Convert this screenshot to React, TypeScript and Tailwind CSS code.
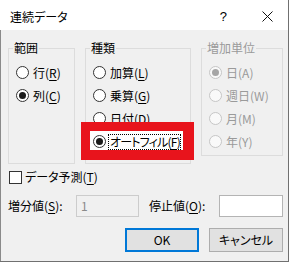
import React from "react";

function Radio({ checked = false, disabled = false }: { checked?: boolean; disabled?: boolean }) {
  return (
    <span
      className={`flex h-[13px] w-[13px] shrink-0 items-center justify-center rounded-full border ${
        disabled ? "border-[#c6c6c6] bg-[#f9f9f9]" : "border-[#333333] bg-white"
      }`}
    >
      {checked && (
        <span className={`h-[7px] w-[7px] rounded-full ${disabled ? "bg-[#a6a6a6]" : "bg-[#1a1a1a]"}`} />
      )}
    </span>
  );
}

function Row({
  label,
  acc,
  checked = false,
  disabled = false,
}: {
  label: string;
  acc: string;
  checked?: boolean;
  disabled?: boolean;
}) {
  return (
    <div className="flex h-[23px] items-center gap-[4px] pl-[7px]">
      <Radio checked={checked} disabled={disabled} />
      <span className={disabled ? "text-[#9a9a9a]" : "text-black"}>
        {label}(
        {disabled ? acc : <span className="underline underline-offset-2">{acc}</span>})
      </span>
    </div>
  );
}

export default function App() {
  return (
    <div className="h-[263px] w-[292px] bg-white font-['Noto_Sans_CJK_JP',sans-serif] text-[12px] leading-[16px] text-black [font-feature-settings:'palt']">
      <div className="flex h-[262px] w-[289px] flex-col border-b border-r border-[#707070]">
        {/* title bar */}
        <div className="flex h-[30px] shrink-0 items-center bg-white pl-[10px] pr-[15px] pt-[3px]">
          <span className="text-[12px]">連続データ</span>
          <span className="ml-auto mr-[35px] font-['Liberation_Sans',sans-serif] text-[13px]">?</span>
          <svg width="11" height="11" viewBox="0 0 11 11" className="mb-[1px]">
            <path d="M0.5 0.5 L10.5 10.5 M10.5 0.5 L0.5 10.5" stroke="#111" strokeWidth="1" />
          </svg>
        </div>

        {/* body */}
        <div className="flex flex-1 flex-col border-l border-[#8a8a8a] bg-[#f0f0f0] pl-[7px] pr-[5px] pt-[10px]">
          <div className="flex gap-[10px]">
            <fieldset className="h-[124px] w-[67px] border border-[#dcdcdc]">
              <legend className="ml-[4px] px-[1px]">範囲</legend>
              <div className="pt-[5px]">
                <Row label="行" acc="R" />
                <Row label="列" acc="C" checked />
              </div>
            </fieldset>

            <fieldset className="h-[124px] w-[106px] border border-[#dcdcdc]">
              <legend className="ml-[4px] px-[1px]">種類</legend>
              <div className="pt-[5px]">
                <Row label="加算" acc="L" />
                <Row label="乗算" acc="G" />
                <Row label="日付" acc="D" />
                <div className="relative flex h-[23px] items-center pl-[7px]">
                  <div className="absolute left-[-5px] top-[-8px] h-[38px] w-[113px] border-b-[10px] border-l-[9px] border-r-[11px] border-t-[9px] border-[#e8141c] bg-white" />
                  <span className="relative">
                    <Radio checked />
                  </span>
                  <span className="relative ml-[2px] whitespace-nowrap border border-dotted border-black pl-[1px] pr-0 leading-[14px] tracking-[-0.8px]">
                    オートフィル(<span className="underline underline-offset-2">F</span>)
                  </span>
                </div>
              </div>
            </fieldset>

            <fieldset className="h-[116px] w-[82px] border border-[#dcdcdc]">
              <legend className="ml-[4px] px-[1px] text-[#9a9a9a]">増加単位</legend>
              <div className="pt-[5px]">
                <Row label="日" acc="A" checked disabled />
                <Row label="週日" acc="W" disabled />
                <Row label="月" acc="M" disabled />
                <Row label="年" acc="Y" disabled />
              </div>
            </fieldset>
          </div>

          {/* checkbox */}
          <div className="mt-[2px] flex h-[22px] items-center gap-[3px] pl-[1px]">
            <span className="h-[13px] w-[13px] border border-[#333333] bg-white" />
            <span>
              データ予測(<span className="underline underline-offset-2">T</span>)
            </span>
          </div>

          {/* values */}
          <div className="mt-[7px] flex h-[22px] items-center">
            <span className="w-[68px]">
              増分値(<span className="underline underline-offset-2">S</span>):
            </span>
            <div className="flex h-[22px] w-[63px] items-center border border-[#cccccc] bg-[#f0f0f0] pl-[4px] text-[#8a8a8a]">
              1
            </div>
            <span className="ml-[10px] w-[70px]">
              停止値(<span className="underline underline-offset-2">O</span>):
            </span>
            <div className="h-[22px] w-[64px] border border-[#b4b4b4] bg-white" />
          </div>

          {/* buttons */}
          <div className="mt-[11px] flex justify-end gap-[10px]">
            <button className="flex h-[24px] w-[74px] items-center justify-center border-2 border-[#0078d7] bg-[#e1e1e1]">
              OK
            </button>
            <button className="flex h-[24px] w-[74px] items-center justify-center border border-[#adadad] bg-[#e1e1e1]">
              キャンセル
            </button>
          </div>
        </div>
      </div>
    </div>
  );
}
